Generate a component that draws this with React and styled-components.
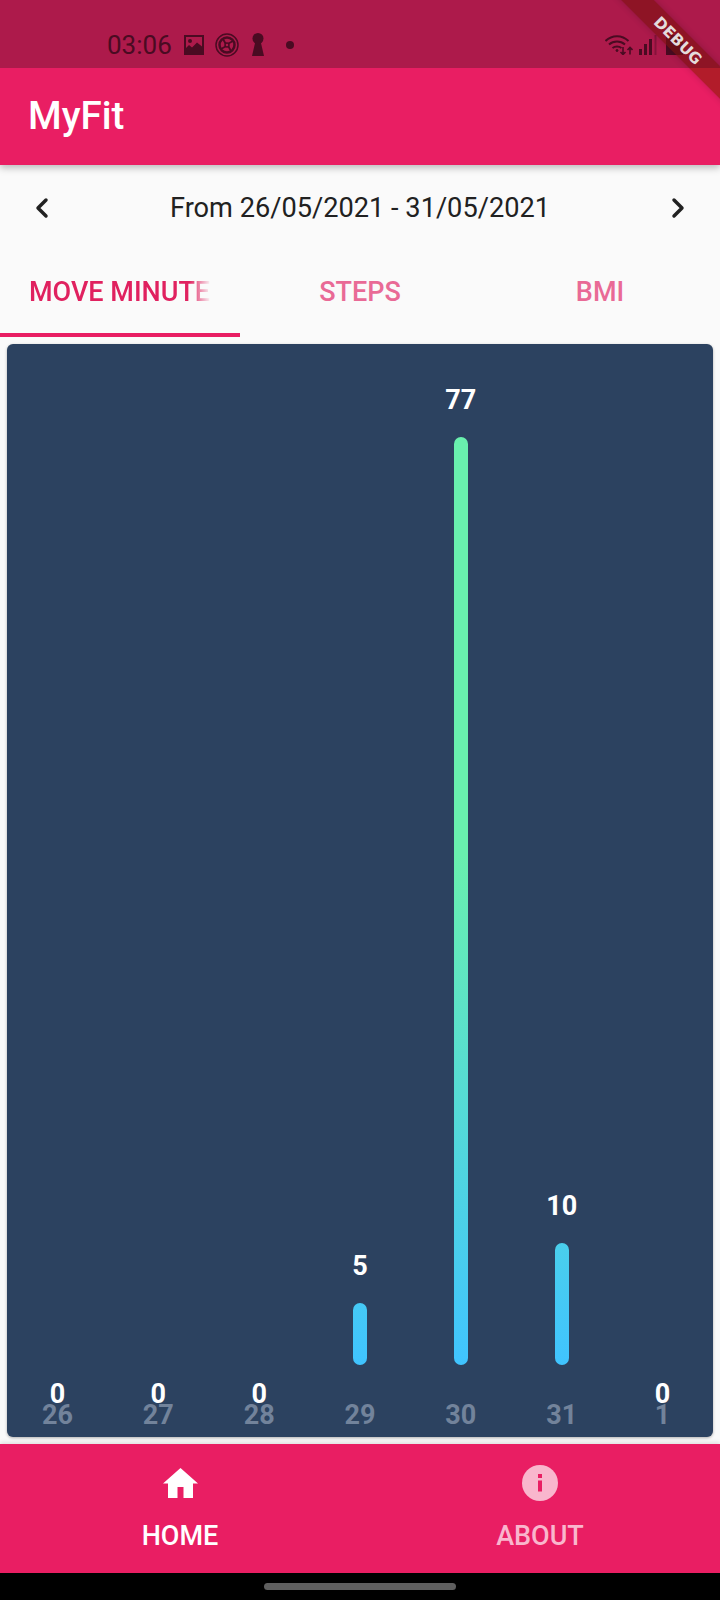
import { createGlobalStyle, styled } from "styled-components"
import { ChevronLeft, ChevronRight } from "lucide-react"

const GlobalStyle = createGlobalStyle`
    html, body {
        margin: 0;
        padding: 0;
        background: #FAFAFA;
    }
    * {
        box-sizing: border-box;
    }
`

const Screen = styled.div`
    display: flex;
    flex-direction: column;
    width: 720px;
    height: 1600px;
    overflow: hidden;
    background: #FAFAFA;
    font-family: Roboto, sans-serif;
`

const StatusBar = styled.div`
    position: relative;
    z-index: 3;
    overflow: hidden;
    display: flex;
    align-items: center;
    justify-content: space-between;
    height: 68px;
    padding: 21px 37px 0 107px;
    background: #AD1A4B;
    color: #4A0B22;
`

const StatusGroup = styled.div`
    display: flex;
    align-items: center;
`

const StatusSlot = styled.span`
    display: flex;
    margin-left: ${props => props.$left}px;
`

const Clock = styled.span`
    font-size: 26px;
    line-height: 32px;
`

const Ribbon = styled.div`
    position: absolute;
    left: 588px;
    top: ${props => props.$top}px;
    width: 180px;
    height: 23px;
    transform: rotate(45deg);
    display: flex;
    align-items: center;
    justify-content: center;
    background: ${props => props.$color};
    box-shadow: 0 0 7px rgba(0, 0, 0, 0.18);
    color: #E4DCDC;
    font-family: "DejaVu Sans", sans-serif;
    font-size: 15.5px;
    font-weight: 700;
`

const AppBar = styled.header`
    position: relative;
    z-index: 2;
    display: flex;
    align-items: center;
    height: 97px;
    padding: 0 28px 2px;
    background: #E91E63;
    box-shadow: 0 3px 7px rgba(0, 0, 0, 0.25);
`

const AppBarClip = styled.div`
    position: absolute;
    inset: 0;
    overflow: hidden;
`

const AppTitle = styled.h1`
    margin: 0;
    color: #FFF;
    font-size: 38.5px;
    font-weight: 500;
`

const DateRow = styled.div`
    display: flex;
    align-items: center;
    justify-content: space-between;
    height: 84px;
    padding: 2px 26px 0;
    color: #212121;
`

const DateLabel = styled.span`
    font-size: 27.2px;
`

const Tabs = styled.nav`
    display: grid;
    grid-template-columns: repeat(3, minmax(0, 1fr));
    height: 88px;
`

const Tab = styled.div`
    display: flex;
    align-items: center;
    justify-content: center;
    padding: 2px 29px 0;
    color: ${props => props.$active ? "#E0215F" : "#E96A96"};
    border-bottom: 4px solid ${props => props.$active ? "#E91E63" : "transparent"};
    font-size: 27px;
    font-weight: 500;
`

const TabLabel = styled.span`
    white-space: nowrap;
    overflow: hidden;
    width: ${props => props.$fade ? "100%" : "auto"};
    ${props => props.$fade && "mask-image: linear-gradient(to right, #000 88%, transparent 100%);"}
`

const ChartCard = styled.section`
    flex: 1;
    display: grid;
    grid-template-columns: repeat(7, 1fr);
    margin: 7px;
    padding: 0 0 10px;
    border-radius: 6px;
    background: #2C4260;
    box-shadow: 0 1px 3px rgba(0, 0, 0, 0.3);
`

const Day = styled.div`
    display: flex;
    flex-direction: column;
    align-items: center;
    justify-content: flex-end;
`

const Value = styled.span`
    color: #FFF;
    font-size: 27px;
    font-weight: 700;
    line-height: 28px;
    margin-bottom: 23px;
`

const ZeroSlot = styled.div`
    height: 38px;
    padding-top: 15px;
`

const ZeroValue = styled(Value)`
    display: block;
    margin: 0;
`

const Bar = styled.div`
    width: 14px;
    border-radius: 7px;
    background: linear-gradient(to top, #40C4FF 0, #69F0AE 510px);
`

const DayLabel = styled.span`
    color: #72839B;
    font-size: 27px;
    font-weight: 700;
    line-height: 24px;
`

const BottomNav = styled.nav`
    position: relative;
    display: grid;
    grid-template-columns: 1fr 1fr;
    height: 129px;
    background: #E91E63;
    box-shadow: 0 -2px 4px rgba(0, 0, 0, 0.1);
`

const NavItem = styled.div`
    display: flex;
    flex-direction: column;
    align-items: center;
    gap: 19px;
    padding-top: 21px;
    color: ${props => props.$active ? "#FFF" : "#F9B6CD"};
    font-size: 27px;
    font-weight: 500;
    line-height: 32px;
`

const NavIcon = styled.span`
    display: flex;
    align-items: center;
    justify-content: center;
    height: 36px;
`

const HomeBar = styled.div`
    display: flex;
    align-items: center;
    justify-content: center;
    flex: 0 0 27px;
    background: #000;
`

const HomeHandle = styled.div`
    width: 192px;
    height: 7px;
    border-radius: 4px;
    background: #5F5F5F;
`

const days = [
    { label: 26, value: 0 },
    { label: 27, value: 0 },
    { label: 28, value: 0 },
    { label: 29, value: 5 },
    { label: 30, value: 77 },
    { label: 31, value: 10 },
    { label: 1, value: 0 },
]

const PictureIcon = () => (
    <svg width="20" height="20" viewBox="0 0 20 20" fill="currentColor">
        <path fillRule="evenodd" d="M0 0h20v20H0zM2 2v11l3-3 3 2.500 5-5 5 4V2z" />
        <circle cx="6" cy="6" r="2" />
    </svg>
)

const ShutterIcon = () => (
    <svg width="24" height="24" viewBox="0 0 24 24" fill="none" stroke="currentColor">
        <circle cx="12" cy="12" r="11" strokeWidth="1.5" />
        <circle cx="12" cy="12" r="7.500" strokeWidth="2.500" />
        <circle cx="12" cy="12" r="2" strokeWidth="1.500" />
        <path d="M8 6 10.500 10.500M18 8l-4.500 2.500M16 18l-2.500-4.500M6 16l4.500-2.500" strokeWidth="1.800" />
    </svg>
)

const KeyholeIcon = () => (
    <svg width="12" height="23" viewBox="0 0 12 23" fill="currentColor">
        <circle cx="6" cy="5.500" r="5.500" />
        <path d="M3.500 8h5l3.500 15H0z" />
    </svg>
)

const Dot = () => (
    <svg width="8" height="8" viewBox="0 0 8 8" fill="currentColor">
        <circle cx="4" cy="4" r="4" />
    </svg>
)

const WifiIcon = () => (
    <svg width="28" height="21" viewBox="0 0 28 21" fill="none" stroke="currentColor" strokeWidth="2">
        <path d="M0.500 7c6.500-6.500 16.500-6.500 23 0M4 10.500c4.500-4 11.500-4 16 0M7.500 14c2.500-2 6.500-2 9 0" />
        <circle cx="12" cy="16.500" r="1" fill="currentColor" strokeWidth="1" />
        <path d="M18 13v7M15.500 18l2.500 2.500 2.500-2.500M25 20.500v-7M22.500 16l2.500-2.500 2.500 2.500" strokeWidth="1.600" />
    </svg>
)

const SignalIcon = () => (
    <svg width="18" height="20" viewBox="0 0 18 20" fill="currentColor">
        <rect x="0" y="14" width="3" height="6" />
        <rect x="5" y="9" width="3" height="11" />
        <rect x="10" y="4" width="3" height="16" />
        <rect x="15.500" y="0" width="2" height="20" opacity="0.4" />
    </svg>
)

const BatteryIcon = () => (
    <svg width="17" height="20" viewBox="0 0 17 20" fill="currentColor">
        <path d="M5 0h7v2h5v18H0V2h5z" />
    </svg>
)

const HomeIcon = () => (
    <svg width="35" height="30" viewBox="0 0 35 30" fill="currentColor">
        <path d="M17.500 0 35 15.500h-5V30H20.500V19h-6v11H5V15.500H0z" />
    </svg>
)

const InfoIcon = () => (
    <svg width="36" height="36" viewBox="0 0 36 36">
        <circle cx="18" cy="18" r="18" fill="currentColor" />
        <rect x="16" y="9" width="4" height="4" fill="#E91E63" />
        <rect x="16" y="15.500" width="4" height="11" fill="#E91E63" />
    </svg>
)

const App = () => {
    return (
        <Screen>
            <GlobalStyle />
            <StatusBar>
                <StatusGroup>
                    <Clock>03:06</Clock>
                    <StatusSlot $left={12}><PictureIcon /></StatusSlot>
                    <StatusSlot $left={11}><ShutterIcon /></StatusSlot>
                    <StatusSlot $left={13}><KeyholeIcon /></StatusSlot>
                    <StatusSlot $left={22}><Dot /></StatusSlot>
                </StatusGroup>
                <StatusGroup>
                    <StatusSlot $left={0}><WifiIcon /></StatusSlot>
                    <StatusSlot $left={6}><SignalIcon /></StatusSlot>
                    <StatusSlot $left={9}><BatteryIcon /></StatusSlot>
                </StatusGroup>
                <Ribbon $top={28.5} $color="rgba(124, 18, 16, 0.63)">DEBUG</Ribbon>
            </StatusBar>
            <AppBar>
                <AppTitle>MyFit</AppTitle>
                <AppBarClip>
                    <Ribbon $top={-39.5} $color="rgba(146, 27, 9, 0.63)" />
                </AppBarClip>
            </AppBar>
            <DateRow>
                <ChevronLeft size={32} strokeWidth={2.6} />
                <DateLabel>From 26/05/2021 - 31/05/2021</DateLabel>
                <ChevronRight size={32} strokeWidth={2.6} />
            </DateRow>
            <Tabs>
                <Tab $active><TabLabel $fade>MOVE MINUTES</TabLabel></Tab>
                <Tab><TabLabel>STEPS</TabLabel></Tab>
                <Tab><TabLabel>BMI</TabLabel></Tab>
            </Tabs>
            <ChartCard>
                {days.map(day => (
                    <Day key={day.label}>
                        {day.value > 0 && <Value>{day.value}</Value>}
                        {day.value > 0 && <Bar style={{ height: day.value * 12.02 + 2 }} />}
                        <ZeroSlot>{day.value === 0 && <ZeroValue>0</ZeroValue>}</ZeroSlot>
                        <DayLabel>{day.label}</DayLabel>
                    </Day>
                ))}
            </ChartCard>
            <BottomNav>
                <NavItem $active><NavIcon><HomeIcon /></NavIcon>HOME</NavItem>
                <NavItem><NavIcon><InfoIcon /></NavIcon>ABOUT</NavItem>
            </BottomNav>
            <HomeBar><HomeHandle /></HomeBar>
        </Screen>
    )
}

export default App
